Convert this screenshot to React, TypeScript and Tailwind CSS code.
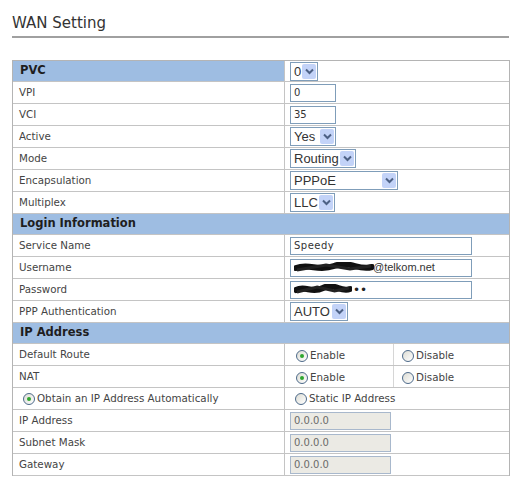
import React from "react";

const font = { fontFamily: '"DejaVu Sans", Verdana, sans-serif' };

function Chevron() {
  return (
    <svg width="9" height="7" viewBox="0 0 9 7">
      <path d="M1 1.5 L4.5 5 L8 1.5" fill="none" stroke="#4d6185" strokeWidth="2" />
    </svg>
  );
}

function Select({ value, width }: { value: string; width: string }) {
  return (
    <div
      className={`flex h-[19px] items-center justify-between border border-[#7f9db9] bg-white pl-[3px] ${width}`}
    >
      <span className="text-[13px] leading-none text-[#333] [font-family:'Liberation_Sans',Arial,sans-serif]">
        {value}
      </span>
      <span className="m-[1px] flex h-[15px] w-[14px] items-center justify-center rounded-[2px] bg-[#c3d3f8]">
        <Chevron />
      </span>
    </div>
  );
}

function Input({
  value,
  width,
  disabled,
  children,
}: {
  value?: string;
  width: string;
  disabled?: boolean;
  children?: React.ReactNode;
}) {
  return (
    <div
      className={`flex h-[18px] items-center border px-[3px] text-[10px] leading-none ${width} ${
        disabled
          ? "border-[#a8b8cc] bg-[#ebeae4] text-[#6a6a6a]"
          : "border-[#7f9db9] bg-white text-[#333]"
      }`}
    >
      {children ?? value}
    </div>
  );
}

function Radio({ checked }: { checked?: boolean }) {
  return (
    <span className="flex h-[12px] w-[12px] shrink-0 items-center justify-center rounded-full border border-[#4d6a8a] bg-gradient-to-br from-[#dcdcd4] to-white">
      {checked && <span className="h-[4px] w-[4px] rounded-full bg-[#2fa62f]" />}
    </span>
  );
}

function Header({ title, split }: { title: string; split?: boolean }) {
  return (
    <div className="flex h-[21px] border-b border-[#c4c4c4]">
      <div className="flex w-[271px] items-center bg-[#9ebde2] pl-[7px] text-[11.5px] font-bold text-[#1e1e1e]">
        {title}
      </div>
      <div
        className={`flex flex-1 items-center border-l border-[#c4c4c4] pl-[5px] ${
          split ? "bg-white" : "border-l-[#9ebde2] bg-[#9ebde2]"
        }`}
      >
        {split && <Select value="0" width="w-[28px]" />}
      </div>
    </div>
  );
}

function Row({ label, children }: { label: React.ReactNode; children?: React.ReactNode }) {
  return (
    <div className="flex h-[22px] border-b border-[#c4c4c4]">
      <div className="flex w-[271px] items-center pl-[6px] text-[10.3px] text-[#444]">{label}</div>
      <div className="flex flex-1 items-center border-l border-[#c4c4c4] pl-[5px]">{children}</div>
    </div>
  );
}

function RadioPair() {
  return (
    <div className="flex h-full flex-1 items-stretch">
      <div className="flex w-[103px] items-center gap-[2px] pl-[6px] pt-[3px] text-[10.3px] text-[#444]">
        <Radio checked />
        <span>Enable</span>
      </div>
      <div className="flex flex-1 items-center gap-[2px] border-l border-[#d6d6d6] pl-[8px] pt-[3px] text-[10.3px] text-[#444]">
        <Radio />
        <span>Disable</span>
      </div>
    </div>
  );
}

function Scribble({ width }: { width: number }) {
  return (
    <svg width={width} height="11" viewBox={`0 0 ${width} 11`}>
      <path
        d={`M2 6 C ${width * 0.2} 1, ${width * 0.3} 10, ${width * 0.5} 4 S ${width * 0.8} 9, ${width - 2} 5`}
        fill="none"
        stroke="#111"
        strokeWidth="6"
        strokeLinecap="round"
      />
      <path
        d={`M3 8 L ${width * 0.4} 3 L ${width * 0.7} 7 L ${width - 3} 4`}
        fill="none"
        stroke="#222"
        strokeWidth="3"
      />
    </svg>
  );
}

export default function App() {
  return (
    <div className="h-[478px] w-[512px] overflow-hidden bg-white" style={font}>
      <div className="ml-[12px] w-[497px] pt-[14px]">
        <h1 className="text-[15px] leading-[18px] text-[#333]">WAN Setting</h1>
        <div className="mt-[4px] h-[2px] bg-[#a0a0a0]" />
      </div>

      <div className="ml-[12px] mt-[22px] w-[498px] border border-b-0 border-[#b4b4b4]">
        <Header title="PVC" split />
        <Row label="VPI">
          <Input value="0" width="w-[46px]" />
        </Row>
        <Row label="VCI">
          <Input value="35" width="w-[46px]" />
        </Row>
        <Row label="Active">
          <Select value="Yes" width="w-[46px]" />
        </Row>
        <Row label="Mode">
          <Select value="Routing" width="w-[66px]" />
        </Row>
        <Row label="Encapsulation">
          <Select value="PPPoE" width="w-[108px]" />
        </Row>
        <Row label="Multiplex">
          <Select value="LLC" width="w-[45px]" />
        </Row>

        <Header title="Login Information" />
        <Row label="Service Name">
          <Input width="w-[182px]">
            <span className="tracking-[0.5px]">Speedy</span>
          </Input>
        </Row>
        <Row label="Username">
          <Input width="w-[182px]">
            <span className="flex items-center text-[11px]">
              <Scribble width={80} />
              <span className="-ml-[1px] [font-family:'Liberation_Sans',Arial,sans-serif]">@telkom.net</span>
            </span>
          </Input>
        </Row>
        <Row label="Password">
          <Input width="w-[182px]">
            <span className="flex items-center">
              <Scribble width={58} />
              <span className="ml-[1px] text-[12px] leading-none text-[#222]">••</span>
            </span>
          </Input>
        </Row>
        <Row label="PPP Authentication">
          <Select value="AUTO" width="w-[58px]" />
        </Row>

        <Header title="IP Address" />
        <Row label="Default Route">
          <RadioPair />
        </Row>
        <Row label="NAT">
          <RadioPair />
        </Row>
        <div className="flex h-[22px] border-b border-[#c4c4c4]">
          <div className="flex w-[271px] items-center gap-[2px] pl-[10px] text-[10.3px] text-[#444]">
            <Radio checked />
            <span>Obtain an IP Address Automatically</span>
          </div>
          <div className="flex flex-1 items-center gap-[2px] border-l border-[#c4c4c4] pl-[10px] text-[10.3px] text-[#444]">
            <Radio />
            <span>Static IP Address</span>
          </div>
        </div>
        <Row label="IP Address">
          <Input value="0.0.0.0" width="w-[101px]" disabled />
        </Row>
        <Row label="Subnet Mask">
          <Input value="0.0.0.0" width="w-[101px]" disabled />
        </Row>
        <Row label="Gateway">
          <Input value="0.0.0.0" width="w-[101px]" disabled />
        </Row>
      </div>
    </div>
  );
}
